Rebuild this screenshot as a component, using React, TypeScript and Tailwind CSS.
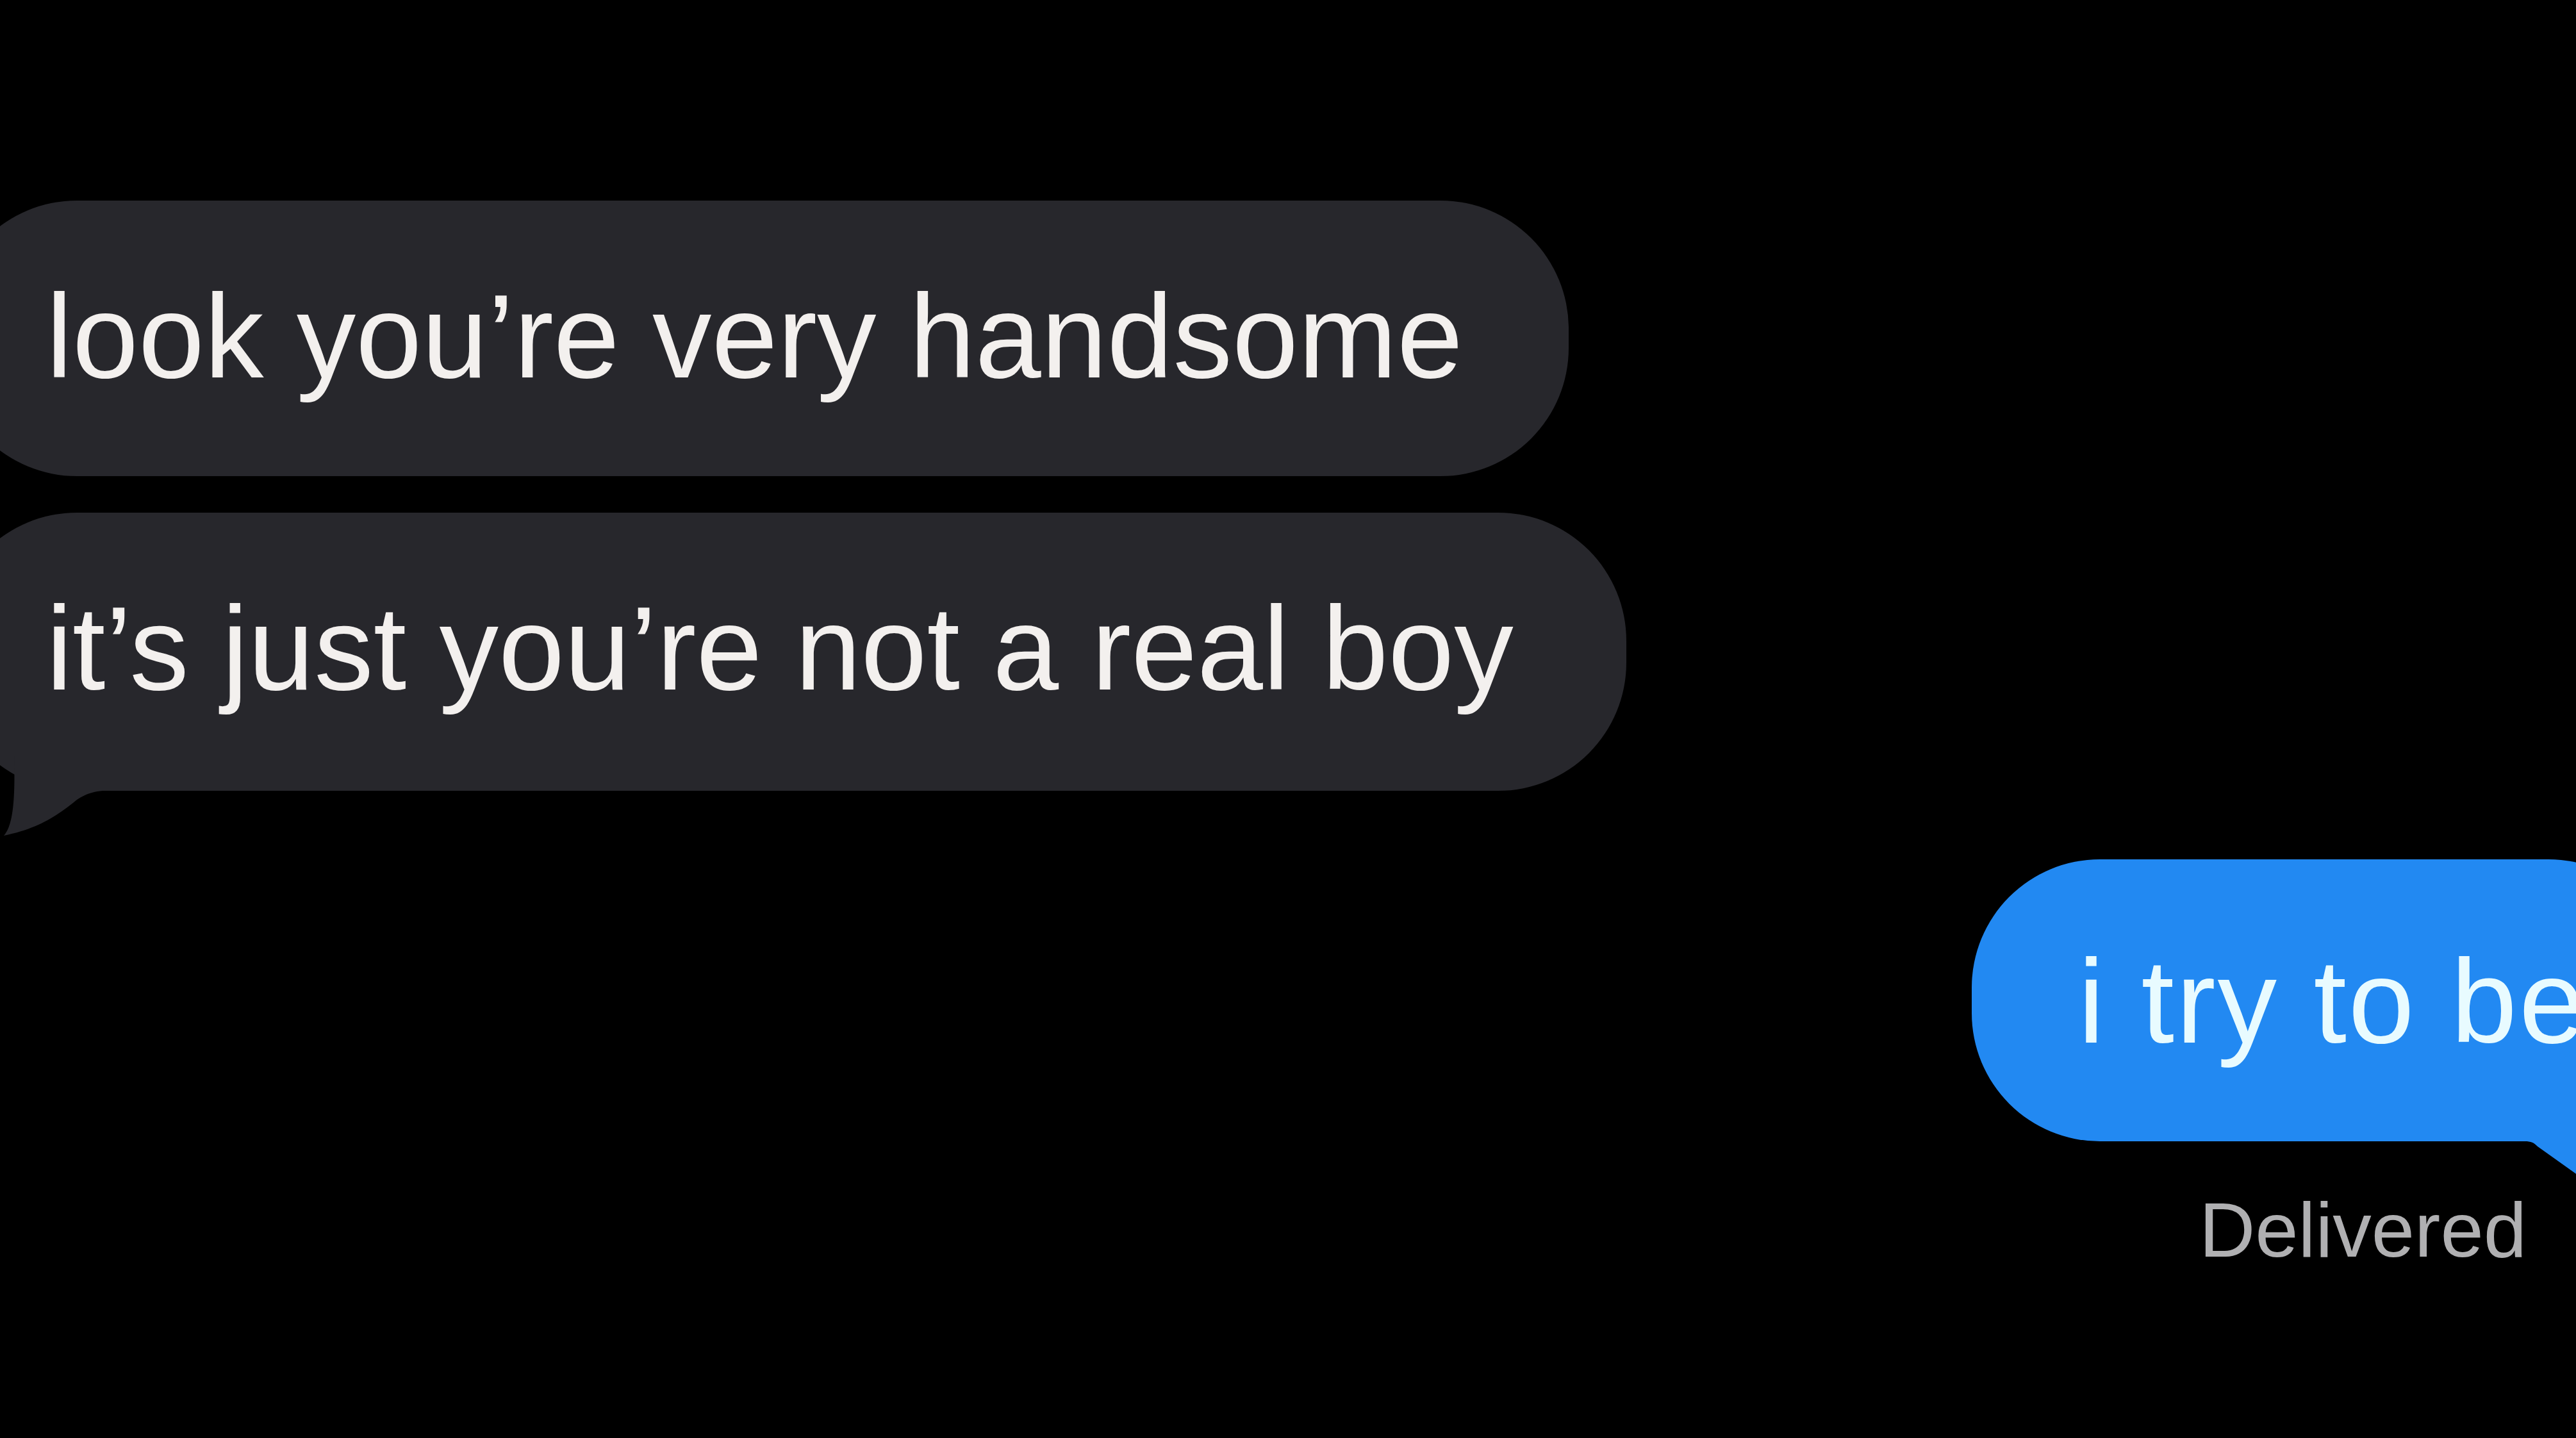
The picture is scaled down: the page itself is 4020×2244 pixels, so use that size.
export default function App() {
  const font = { fontFamily: '"Liberation Sans", Arial, sans-serif' };

  return (
    <div
      className="w-[4020px] h-[2244px] bg-black overflow-hidden flex flex-col pt-[313px]"
      style={font}
    >
      {/* incoming */}
      <div className="flex flex-col gap-[57px]">
        <div className="-ml-[80px] w-[2528px] h-[430px] rounded-[200px] bg-[#27272c] pl-[152px] pt-[120px]">
          <p className="text-[185px] leading-none text-[#f3f0ee] whitespace-nowrap">
            look you’re very handsome
          </p>
        </div>

        <div className="relative -ml-[80px] w-[2618px] h-[434px] rounded-[200px] bg-[#27272c] pl-[152px] pt-[120px]">
          <p className="text-[185px] leading-none text-[#f3f0ee] whitespace-nowrap">
            it’s just you’re not a real boy
          </p>
          <svg
            className="absolute left-[80px] top-[380px]"
            width="180"
            height="130"
            viewBox="0 0 180 130"
          >
            <path
              d="M22 0 L180 0 L180 53 C 150 53 135 58 120 68 C 95 88 65 112 6 124 C 20 108 24 70 22 0 Z"
              fill="#27272c"
            />
          </svg>
        </div>
      </div>

      {/* outgoing */}
      <div className="flex justify-end mt-[107px]">
        <div className="relative -mr-[157px] w-[1100px] h-[440px] rounded-[200px] bg-[#2289f2] pl-[166px] pt-[130px]">
          <p className="text-[185px] leading-none tracking-[3px] text-[#e8fbff] whitespace-nowrap">
            i try to be
          </p>
          <svg
            className="absolute left-[863px] top-[380px]"
            width="237"
            height="150"
            viewBox="0 0 237 150"
          >
            <path d="M0 60 C 10 60 14 62 20 68 L 100 125 L 237 125 L 237 0 L 0 0 Z" fill="#2289f2" />
          </svg>
        </div>
      </div>

      <div className="flex justify-end pr-[77px] mt-[78px]">
        <span className="text-[121px] leading-none text-[#b0b0b2] whitespace-nowrap">Delivered</span>
      </div>
    </div>
  );
}
